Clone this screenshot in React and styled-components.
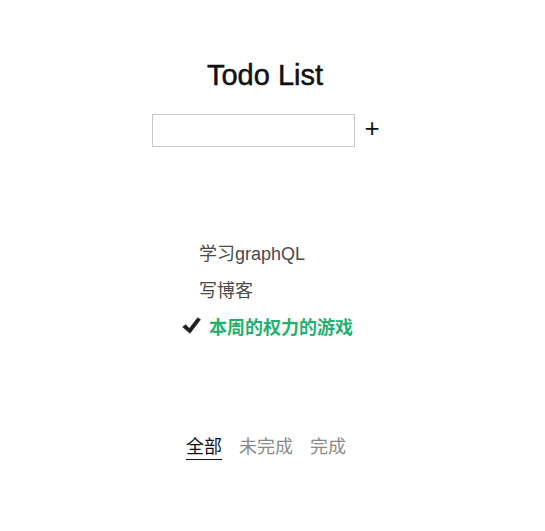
import React, { useState } from "react";
import styled, { createGlobalStyle } from "styled-components";

const GlobalStyle = createGlobalStyle`
  body {
    margin: 0;
    background: #fff;
    font-family: "Liberation Sans", "Noto Sans CJK SC", sans-serif;
  }
`;

const todos = [
  { id: 1, text: "学习graphQL", done: false },
  { id: 2, text: "写博客", done: false },
  { id: 3, text: "本周的权力的游戏", done: true },
];

const filters = ["全部", "未完成", "完成"];

function CheckMark() {
  return (
    <svg width="19" height="17" viewBox="0 0 18 16">
      <path
        d="M0.6 9.4 L3.6 7.2 L6.9 10.9 L14.9 0.6 L17.5 2.4 L7.6 15.4 Z"
        fill="#1e1e1e"
        stroke="#1e1e1e"
        strokeWidth="0.6"
        strokeLinejoin="round"
      />
    </svg>
  );
}

function App() {
  const [filter, setFilter] = useState("全部");
  return (
    <Page>
      <GlobalStyle />
      <Title>Todo List</Title>
      <AddRow>
        <Input />
        <AddButton>+</AddButton>
      </AddRow>
      <List>
        {todos.map((todo) => (
          <Item key={todo.id} done={todo.done}>
            {todo.done && <CheckMark />}
            <span>{todo.text}</span>
          </Item>
        ))}
      </List>
      <Footer>
        {filters.map((f) => (
          <FilterLink key={f} active={f === filter} onClick={() => setFilter(f)}>
            {f}
          </FilterLink>
        ))}
      </Footer>
    </Page>
  );
}

export default App;

const Page = styled.div`
  width: 530px;
  padding-top: 59px;
  display: flex;
  flex-direction: column;
  align-items: center;
`;

const Title = styled.h1`
  margin: 0;
  font-size: 29px;
  line-height: 32px;
  font-weight: normal;
  color: #111;
  -webkit-text-stroke: 0.5px #111;
`;

const AddRow = styled.div`
  margin: 23px 0 0 2px;
  display: flex;
  align-items: center;
  gap: 9px;
`;

const Input = styled.input`
  box-sizing: border-box;
  width: 203px;
  height: 33px;
  border: 1px solid #c8c8c8;
  outline: none;
  padding: 0 6px;
  font-size: 16px;
`;

const AddButton = styled.span`
  font-size: 26px;
  line-height: 30px;
  margin-top: -5px;
  color: #111;
  cursor: pointer;
`;

const List = styled.ul`
  list-style: none;
  margin: 86px 0 0 3px;
  padding: 0;
  width: fit-content;
`;

const Item = styled.li.withConfig({ shouldForwardProp: (p) => p !== "done" })`
  height: 37px;
  display: flex;
  align-items: center;
  gap: 8px;
  font-size: 18px;
  padding-left: ${(p) => (p.done ? "2px" : "19px")};
  color: ${(p) => (p.done ? "#1fb16f" : "#4a4a4a")};
  font-weight: ${(p) => (p.done ? "bold" : "normal")};
`;

const Footer = styled.div`
  margin: 91px 0 0 2px;
  display: flex;
  gap: 17px;
`;

const FilterLink = styled.span.withConfig({ shouldForwardProp: (p) => p !== "active" })`
  font-size: 18px;
  line-height: 24px;
  padding-bottom: 0;
  cursor: pointer;
  color: ${(p) => (p.active ? "#111" : "#8a8a8a")};
  border-bottom: 1px solid ${(p) => (p.active ? "#111" : "transparent")};
`;
